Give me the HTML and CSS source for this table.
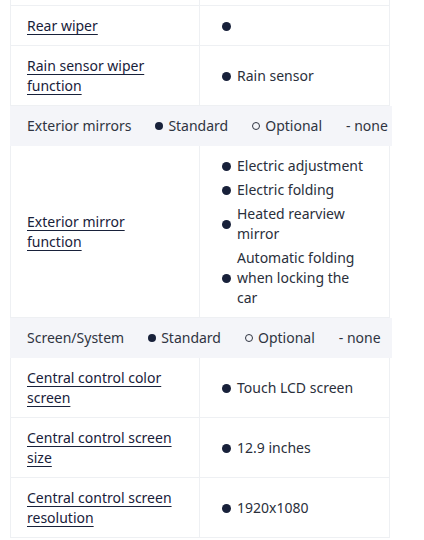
FILE: index.html
```html
<!DOCTYPE html>
<html>
<head>
<meta charset="utf-8">
<link rel="stylesheet" href="styles.css">
</head>
<body>
<div class="spec">
  <div class="row stub"><div class="key"></div><div class="val"></div></div>
  <div class="row">
    <div class="key"><a class="link">Rear wiper</a></div>
    <div class="val"><ul class="list"><li class="item"></li></ul></div>
  </div>
  <div class="row">
    <div class="key"><a class="link">Rain sensor wiper function</a></div>
    <div class="val"><ul class="list"><li class="item">Rain sensor</li></ul></div>
  </div>
  <div class="group">
    <span class="group-name">Exterior mirrors</span>
    <span class="legend"><span class="dot"></span>Standard</span>
    <span class="legend"><span class="ring"></span>Optional</span>
    <span class="legend">- none</span>
  </div>
  <div class="row">
    <div class="key"><a class="link">Exterior mirror function</a></div>
    <div class="val">
      <ul class="list">
        <li class="item">Electric adjustment</li>
        <li class="item">Electric folding</li>
        <li class="item">Heated rearview mirror</li>
        <li class="item">Automatic folding when locking the car</li>
      </ul>
    </div>
  </div>
  <div class="group">
    <span class="group-name">Screen/System</span>
    <span class="legend"><span class="dot"></span>Standard</span>
    <span class="legend"><span class="ring"></span>Optional</span>
    <span class="legend">- none</span>
  </div>
  <div class="row">
    <div class="key"><a class="link">Central control color screen</a></div>
    <div class="val"><ul class="list"><li class="item">Touch LCD screen</li></ul></div>
  </div>
  <div class="row">
    <div class="key"><a class="link">Central control screen size</a></div>
    <div class="val"><ul class="list"><li class="item">12.9 inches</li></ul></div>
  </div>
  <div class="row">
    <div class="key"><a class="link">Central control screen resolution</a></div>
    <div class="val"><ul class="list"><li class="item">1920x1080</li></ul></div>
  </div>
</div>
</body>
</html>
```

FILE: styles.css
```css
html, body {
  margin: 0;
  padding: 0;
  background: #ffffff;
}
body {
  font-family: "Noto Sans", "Open Sans", sans-serif;
  font-size: 14px;
  line-height: 20px;
  color: #2a2f3b;
  overflow: hidden;
  height: 540px;
}
.spec {
  margin-left: 10px;
  width: 380px;
}
.row {
  display: grid;
  grid-template-columns: 189px 189px;
  border-bottom: 1px solid #eef0f3;
  border-left: 1px solid #eef0f3;
  border-right: 1px solid #eef0f3;
  box-sizing: border-box;
}
.row.stub {
  height: 6px;
  overflow: hidden;
}
.key {
  display: flex;
  align-items: center;
  padding: 10px 22px 9px 16px;
  border-right: 1px solid #eef0f3;
}
.val {
  display: flex;
  align-items: center;
  padding: 10px 22px 9px 22px;
}
.link {
  color: #18213a;
  text-decoration: underline;
  text-decoration-thickness: 1px;
  text-underline-offset: 3px;
}
.list {
  list-style: none;
  margin: 0;
  padding: 0;
  display: flex;
  flex-direction: column;
  gap: 4px;
}
.item {
  display: flex;
  align-items: center;
  gap: 6px;
  min-height: 20px;
}
.item::before {
  content: "";
  flex: none;
  width: 9px;
  height: 9px;
  border-radius: 50%;
  background: #18213a;
}
.group {
  width: 382px;
  height: 40px;
  box-sizing: border-box;
  background: #f4f5f9;
  display: flex;
  align-items: center;
  padding-left: 17px;
  gap: 24px;
  white-space: nowrap;
  overflow: hidden;
  color: #2f3441;
}
.legend {
  display: inline-flex;
  align-items: center;
  gap: 5px;
}
.dot {
  width: 8px;
  height: 8px;
  border-radius: 50%;
  background: #18213a;
}
.ring {
  width: 6px;
  height: 6px;
  border-radius: 50%;
  border: 1px solid #2f3441;
}
```
